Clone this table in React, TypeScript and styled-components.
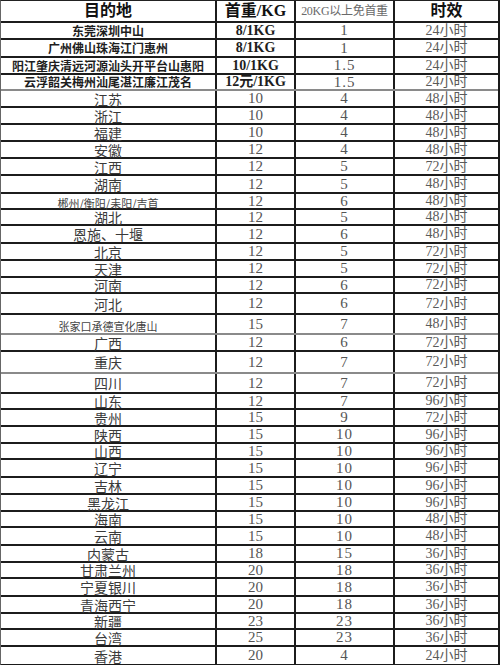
import React from "react";
import styled, { createGlobalStyle, css } from "styled-components";

type Kind = "plain" | "city" | "small";

interface Rate {
  place: string;
  price: string;
  free: string;
  time: string;
  h: number;
  kind?: Kind;
  soft?: boolean;
}

const rates: Rate[] = [
  { place: "东莞深圳中山", price: "8/1KG", free: "1", time: "24小时", h: 17, kind: "city" },
  { place: "广州佛山珠海江门惠州", price: "8/1KG", free: "1", time: "24小时", h: 18, kind: "city" },
  { place: "阳江肇庆清远河源汕头开平台山惠阳", price: "10/1KG", free: "1.5", time: "24小时", h: 17, kind: "city" },
  { place: "云浮韶关梅州汕尾湛江廉江茂名", price: "12元/1KG", free: "1.5", time: "24小时", h: 16, kind: "city", soft: true },
  { place: "江苏", price: "10", free: "4", time: "48小时", h: 17 },
  { place: "浙江", price: "10", free: "4", time: "48小时", h: 17 },
  { place: "福建", price: "10", free: "4", time: "48小时", h: 17 },
  { place: "安徽", price: "12", free: "4", time: "48小时", h: 17 },
  { place: "江西", price: "12", free: "5", time: "72小时", h: 17 },
  { place: "湖南", price: "12", free: "5", time: "48小时", h: 18 },
  { place: "郴州/衡阳/耒阳/吉首", price: "12", free: "6", time: "48小时", h: 16, kind: "small" },
  { place: "湖北", price: "12", free: "5", time: "48小时", h: 16 },
  { place: "恩施、十堰", price: "12", free: "6", time: "48小时", h: 18 },
  { place: "北京", price: "12", free: "5", time: "72小时", h: 17 },
  { place: "天津", price: "12", free: "5", time: "72小时", h: 17 },
  { place: "河南", price: "12", free: "6", time: "72小时", h: 16 },
  { place: "河北", price: "12", free: "6", time: "72小时", h: 21 },
  { place: "张家口承德宣化唐山", price: "15", free: "7", time: "48小时", h: 20, kind: "small", soft: true },
  { place: "广西", price: "12", free: "6", time: "72小时", h: 17 },
  { place: "重庆", price: "12", free: "7", time: "72小时", h: 22, soft: true },
  { place: "四川", price: "12", free: "7", time: "72小时", h: 20 },
  { place: "山东", price: "12", free: "7", time: "96小时", h: 16 },
  { place: "贵州", price: "15", free: "9", time: "72小时", h: 17 },
  { place: "陕西", price: "15", free: "10", time: "96小时", h: 17 },
  { place: "山西", price: "15", free: "10", time: "96小时", h: 16 },
  { place: "辽宁", price: "15", free: "10", time: "96小时", h: 18 },
  { place: "吉林", price: "15", free: "10", time: "96小时", h: 17 },
  { place: "黑龙江", price: "15", free: "10", time: "96小时", h: 17 },
  { place: "海南", price: "15", free: "10", time: "48小时", h: 16 },
  { place: "云南", price: "15", free: "10", time: "48小时", h: 18 },
  { place: "内蒙古", price: "18", free: "15", time: "36小时", h: 17 },
  { place: "甘肃兰州", price: "20", free: "18", time: "36小时", h: 16 },
  { place: "宁夏银川", price: "20", free: "18", time: "36小时", h: 18 },
  { place: "青海西宁", price: "20", free: "18", time: "36小时", h: 17 },
  { place: "新疆", price: "23", free: "23", time: "36小时", h: 16 },
  { place: "台湾", price: "25", free: "23", time: "36小时", h: 17 },
  { place: "香港", price: "20", free: "4", time: "24小时", h: 17 },
];

const GlobalStyle = createGlobalStyle`
  html, body {
    margin: 0;
    padding: 0;
    background: #ffffff;
  }
  body {
    font-family: "Liberation Serif", "Noto Sans CJK SC", serif;
  }
`;

const Sheet = styled.div`
  width: 500px;
  box-sizing: border-box;
  border-top: 1px solid #222;
  border-left: 1px solid #666;
  border-right: 2px solid #1a1a1a;
  border-bottom: 2px solid #1a1a1a;
  background: #fff;
`;

const Row = styled.div<{ $h: number; $soft?: boolean; $last?: boolean }>`
  display: grid;
  grid-template-columns: 216px 79px 99px 1fr;
  height: ${(p) => p.$h}px;
  box-sizing: border-box;
  border-bottom: ${(p) => (p.$last ? "none" : `2px solid ${p.$soft ? "#8a8a8a" : "#1c1c1c"}`)};
`;

const Cell = styled.div<{ $edge?: boolean }>`
  display: flex;
  align-items: center;
  justify-content: center;
  box-sizing: border-box;
  min-height: 0;
  border-right: ${(p) => (p.$edge ? "none" : "2px solid #1c1c1c")};
  white-space: nowrap;
`;

const HeadText = styled.span<{ $size: number; $light?: boolean }>`
  font-family: "Liberation Serif", "Noto Sans CJK SC", serif;
  font-size: ${(p) => p.$size}px;
  line-height: 1;
  font-weight: ${(p) => (p.$light ? 400 : 700)};
  color: ${(p) => (p.$light ? "#6a6a6a" : "#111")};
  letter-spacing: ${(p) => (p.$light ? "-0.3px" : "0")};
`;

const Place = styled.span<{ $kind: Kind }>`
  font-family: "Noto Sans CJK SC", sans-serif;
  line-height: 1;
  ${(p) =>
    p.$kind === "city"
      ? css`
          font-size: 12px;
          font-weight: 700;
          color: #1e1e1e;
        `
      : p.$kind === "small"
      ? css`
          font-size: 11px;
          font-weight: 400;
          color: #444;
          padding-top: 4px;
        `
      : css`
          font-size: 14px;
          font-weight: 400;
          color: #3a3a3a;
        `}
`;

const Price = styled.span<{ $bold?: boolean }>`
  font-family: "Liberation Serif", "Noto Sans CJK SC", serif;
  font-size: ${(p) => (p.$bold ? 14 : 15)}px;
  line-height: 1;
  font-weight: ${(p) => (p.$bold ? 700 : 400)};
  color: ${(p) => (p.$bold ? "#1e1e1e" : "#555")};
`;

const Free = styled.span`
  font-family: "Liberation Serif", "Noto Sans CJK SC", serif;
  font-size: 15px;
  line-height: 1;
  color: #555;
  letter-spacing: 1px;
`;

const Time = styled.span`
  font-family: "Liberation Serif", "Noto Sans CJK SC", serif;
  font-size: 14px;
  line-height: 1;
  color: #5a5a5a;
`;

export default function App() {
  return (
    <>
      <GlobalStyle />
      <Sheet>
        <Row $h={22}>
          <Cell>
            <HeadText $size={16}>目的地</HeadText>
          </Cell>
          <Cell>
            <HeadText $size={16}>首重/KG</HeadText>
          </Cell>
          <Cell>
            <HeadText $size={12} $light>
              20KG以上免首重
            </HeadText>
          </Cell>
          <Cell $edge>
            <HeadText $size={16}>时效</HeadText>
          </Cell>
        </Row>
        {rates.map((r, i) => (
          <Row key={r.place} $h={r.h} $soft={r.soft} $last={i === rates.length - 1}>
            <Cell>
              <Place $kind={r.kind ?? "plain"}>{r.place}</Place>
            </Cell>
            <Cell>
              <Price $bold={r.kind === "city"}>{r.price}</Price>
            </Cell>
            <Cell>
              <Free>{r.free}</Free>
            </Cell>
            <Cell $edge>
              <Time>{r.time}</Time>
            </Cell>
          </Row>
        ))}
      </Sheet>
    </>
  );
}
